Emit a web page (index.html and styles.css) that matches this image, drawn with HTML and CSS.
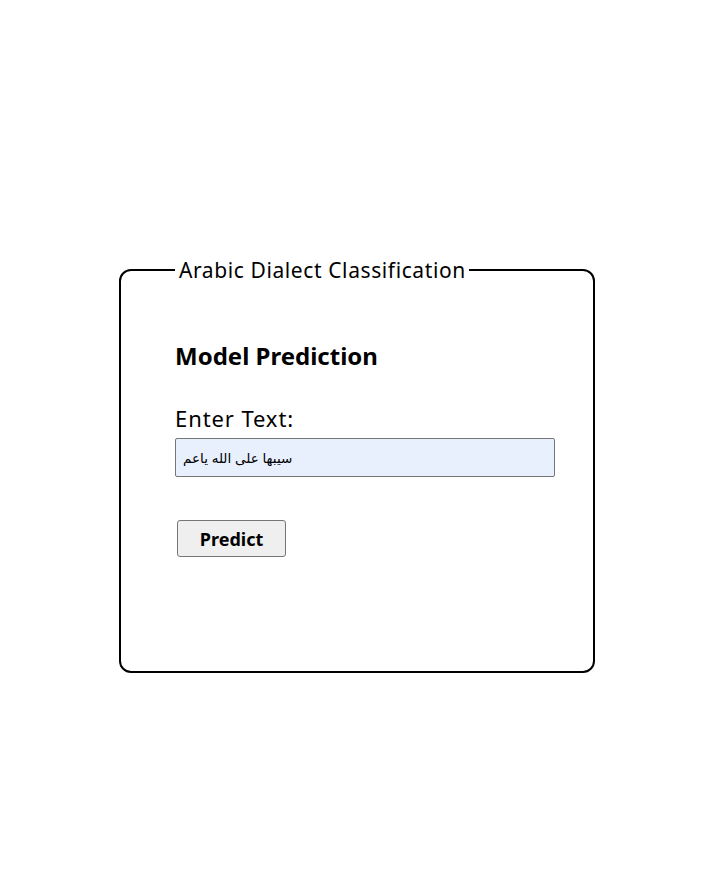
FILE: index.html
```html
<!DOCTYPE html>
<html lang="en">
<head>
<meta charset="utf-8">
<title>Arabic Dialect Classification</title>
<link rel="stylesheet" href="styles.css">
</head>
<body>
<div class="page">
  <fieldset class="panel">
    <legend class="panel-title">Arabic Dialect Classification</legend>
    <h2 class="heading">Model Prediction</h2>
    <label class="field-label" for="text">Enter Text:</label>
    <input class="text-input" id="text" type="text" value="سيبها على الله ياعم">
    <button class="predict-btn" type="button">Predict</button>
  </fieldset>
</div>
</body>
</html>
```
FILE: styles.css
```css
html, body {
  margin: 0;
  padding: 0;
  background: #ffffff;
}
body {
  font-family: "Noto Sans", "DejaVu Sans", sans-serif;
  color: #000;
}
.page {
  padding: 258px 0 0 119px;
}
.panel {
  box-sizing: border-box;
  width: 475px;
  margin: 0;
  padding: 59px 38px 114px 54px;
  border: 2px solid #000;
  border-radius: 12px;
  display: flex;
  flex-direction: column;
  align-items: flex-start;
}
.panel-title {
  padding: 0 3px 0 4px;
  font-size: 21px;
  line-height: 24px;
  letter-spacing: 0.6px;
}
.heading {
  margin: 0;
  font-size: 24px;
  line-height: 30px;
  font-weight: 700;
}
.field-label {
  margin-top: 35px;
  font-size: 22px;
  line-height: 24px;
  letter-spacing: 0.9px;
}
.text-input {
  box-sizing: border-box;
  margin: 8px 0 0 0;
  width: 380px;
  height: 39px;
  padding: 0 7px;
  border: 1px solid #767676;
  border-radius: 2px;
  background: #e8f0fe;
  font-family: "Liberation Sans", "DejaVu Sans", sans-serif;
  font-size: 13.5px;
  color: #000;
  outline: none;
}
.predict-btn {
  box-sizing: border-box;
  margin: 43px 0 0 2px;
  width: 109px;
  height: 37px;
  padding: 0;
  background: #efefef;
  border: 1px solid #767676;
  border-radius: 3px;
  font-family: "Noto Sans", "DejaVu Sans", sans-serif;
  font-size: 18px;
  font-weight: 700;
  color: #000;
}
```
